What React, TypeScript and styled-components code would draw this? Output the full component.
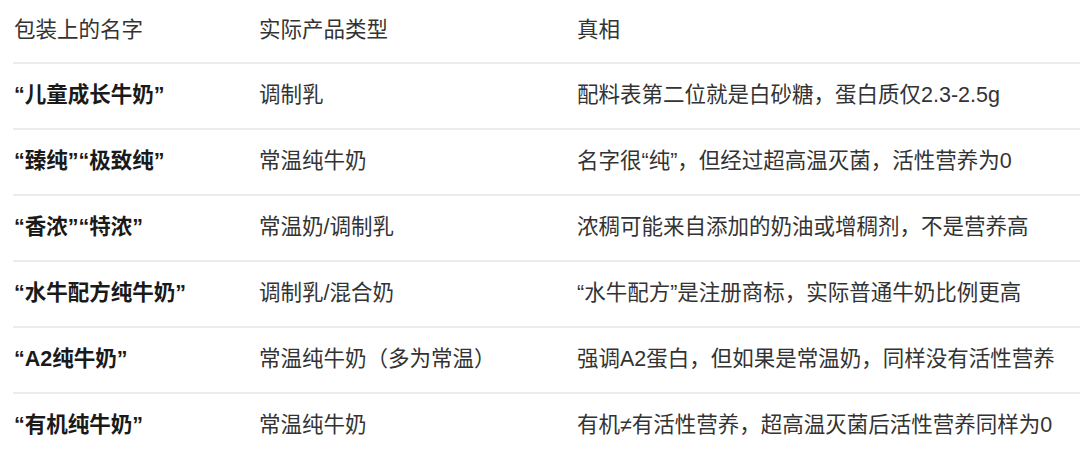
import React from 'react';
import styled, { createGlobalStyle } from 'styled-components';

interface Row {
  name: string;
  type: string;
  truth: string;
}

const rows: Row[] = [
  { name: '“儿童成长牛奶”', type: '调制乳', truth: '配料表第二位就是白砂糖，蛋白质仅2.3-2.5g' },
  { name: '“臻纯”“极致纯”', type: '常温纯牛奶', truth: '名字很“纯”，但经过超高温灭菌，活性营养为0' },
  { name: '“香浓”“特浓”', type: '常温奶/调制乳', truth: '浓稠可能来自添加的奶油或增稠剂，不是营养高' },
  { name: '“水牛配方纯牛奶”', type: '调制乳/混合奶', truth: '“水牛配方”是注册商标，实际普通牛奶比例更高' },
  { name: '“A2纯牛奶”', type: '常温纯牛奶（多为常温）', truth: '强调A2蛋白，但如果是常温奶，同样没有活性营养' },
  { name: '“有机纯牛奶”', type: '常温纯牛奶', truth: '有机≠有活性营养，超高温灭菌后活性营养同样为0' },
];

const GlobalStyle = createGlobalStyle`
  body {
    margin: 0;
    background: #ffffff;
    font-family: "Liberation Sans", "Noto Sans CJK SC", sans-serif;
  }
`;

const Table = styled.div`
  margin-left: 13px;
  width: 1067px;
  height: 455px;
  overflow: hidden;
`;

const TableRow = styled.div<{ $head?: boolean }>`
  display: grid;
  grid-template-columns: 245px 318px 1fr;
  align-items: center;
  height: ${(p) => (p.$head ? '62px' : '64px')};
  border-bottom: 2px solid #ececec;
  &:last-child {
    border-bottom: none;
  }
`;

const Cell = styled.div<{ $strong?: boolean }>`
  padding-left: 1px;
  font-size: 21.5px;
  line-height: 1.3;
  white-space: nowrap;
  color: ${(p) => (p.$strong ? '#1a1a1a' : '#333333')};
  font-weight: ${(p) => (p.$strong ? 700 : 400)};
`;

const App: React.FC = () => {
  return (
    <>
      <GlobalStyle />
      <Table>
        <TableRow $head>
          <Cell>包装上的名字</Cell>
          <Cell>实际产品类型</Cell>
          <Cell>真相</Cell>
        </TableRow>
        {rows.map((r) => (
          <TableRow key={r.name}>
            <Cell $strong>{r.name}</Cell>
            <Cell>{r.type}</Cell>
            <Cell>{r.truth}</Cell>
          </TableRow>
        ))}
      </Table>
    </>
  );
};

export default App;
